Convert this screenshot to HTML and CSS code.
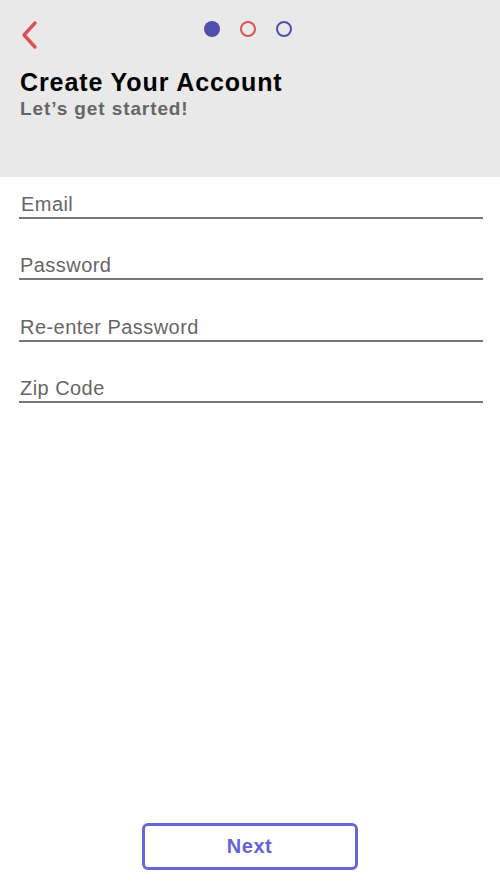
FILE: index.html
```html
<!DOCTYPE html>
<html>
<head>
<meta charset="utf-8">
<link rel="stylesheet" href="styles.css">
</head>
<body>
<div class="screen">
  <header class="header">
    <div class="topbar">
      <svg class="back" width="20" height="30" viewBox="0 0 20 30"><polyline points="15,3 4,15 15,27" fill="none" stroke="#d9534f" stroke-width="3.4" stroke-linecap="round" stroke-linejoin="round"/></svg>
      <div class="dots">
        <span class="dot filled"></span>
        <span class="dot ring-red"></span>
        <span class="dot ring-blue"></span>
      </div>
    </div>
    <h1 class="title">Create Your Account</h1>
    <p class="subtitle">Let’s get started!</p>
  </header>
  <main class="form">
    <div class="field f1">Email</div>
    <div class="field">Password</div>
    <div class="field">Re-enter Password</div>
    <div class="field">Zip Code</div>
  </main>
  <div class="footer">
    <button class="next">Next</button>
  </div>
</div>
</body>
</html>
```
FILE: styles.css
```css
html, body { margin: 0; padding: 0; }
body { width: 500px; height: 890px; background: #fff; font-family: "Liberation Sans", Arial, sans-serif; }
.screen { display: flex; flex-direction: column; height: 890px; }
.header { background: #e9e9e9; height: 177px; box-sizing: border-box; padding: 0 20px; }
.topbar { position: relative; height: 60px; }
.back { position: absolute; left: 0; top: 20px; }
.dots { position: absolute; left: 184px; top: 21px; display: flex; gap: 20px; }
.dot { width: 16px; height: 16px; border-radius: 50%; box-sizing: border-box; }
.filled { background: #4f4fae; }
.ring-red { border: 2.5px solid #d9534f; }
.ring-blue { border: 2.5px solid #4f4fae; }
.title { margin: 8px 0 0; font-size: 25px; font-weight: bold; color: #000; line-height: 28px; letter-spacing: 0.9px; }
.subtitle { margin: 1px 0 0; font-size: 19px; font-weight: bold; color: #666; line-height: 24px; letter-spacing: 0.9px; }
.form { padding: 0 17px 0 19px; display: flex; flex-direction: column; }
.field { font-size: 20px; color: #666; border-bottom: 2.5px solid #777; height: 20px; line-height: 20px; padding-top: 11px; padding-bottom: 3px; margin-top: 25.3px; padding-left: 1px; letter-spacing: 0.45px; }
.field.f1 { margin-top: 6px; padding-left: 2px; }
.footer { margin-top: auto; display: flex; justify-content: center; padding-bottom: 20px; }
.next { width: 216px; height: 47px; border: 3px solid #6866d6; border-radius: 6px; background: #fff; color: #6462d6; font-family: "Liberation Sans", Arial, sans-serif; font-size: 20px; font-weight: bold; margin-left: -1px; letter-spacing: 0.5px; }
```
